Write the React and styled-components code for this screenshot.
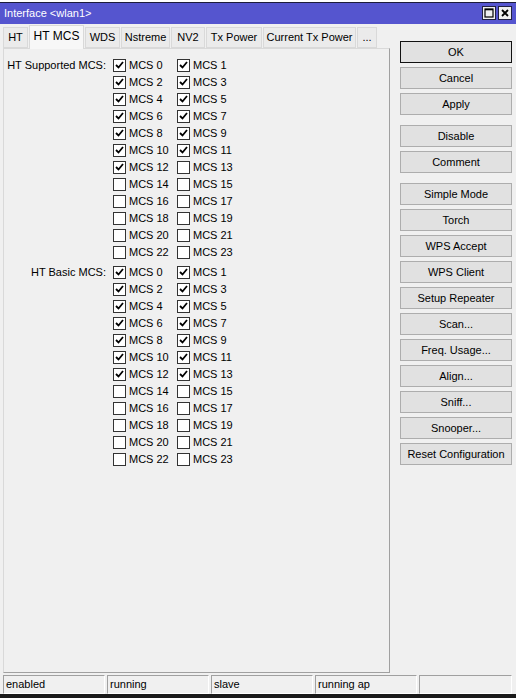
import React from 'react';
import styled, { createGlobalStyle } from 'styled-components';

const GlobalStyle = createGlobalStyle`
  html, body {
    margin: 0;
    padding: 0;
    background: #f0f0f0;
  }
  body {
    font-family: "Liberation Sans", Arial, sans-serif;
    font-size: 11px;
    color: #000;
  }
`;

const Screen = styled.div`
  width: 516px;
  height: 698px;
  display: flex;
  flex-direction: column;
  overflow: hidden;
  background: #f0f0f0;
`;

const TopStrip = styled.div`
  height: 2px;
  background: #fff;
  border-bottom: 1px solid #1c1c3a;
`;

const TitleBar = styled.div`
  height: 21px;
  background: #5555cf;
  display: flex;
  align-items: center;
  justify-content: space-between;
  padding: 0 4px;
`;

const Title = styled.span`
  color: #fff;
  font-size: 11px;
`;

const TitleButtons = styled.div`
  display: flex;
  gap: 2px;
`;

const TitleButton = styled.div`
  width: 14px;
  height: 14px;
  box-sizing: border-box;
  background: #f0f0f0;
  border: 1px solid #202040;
  display: flex;
  align-items: center;
  justify-content: center;
`;

const Body = styled.div`
  flex: 1;
  display: flex;
  gap: 10px;
  padding: 1px 4px 0 3px;
`;

const LeftPane = styled.div`
  width: 387px;
  display: flex;
  flex-direction: column;
`;

const TabRow = styled.div`
  display: flex;
  align-items: flex-end;
  height: 23px;
`;

const Tab = styled.div`
  width: ${p => p.$w}px;
  height: ${p => (p.$active ? '24px' : '21px')};
  box-sizing: border-box;
  display: flex;
  align-items: center;
  justify-content: center;
  white-space: nowrap;
  border: 1px solid #d9d9d9;
  border-bottom: ${p => (p.$active ? 'none' : '1px solid #d9d9d9')};
  background: ${p => (p.$active ? '#f7f7f7' : '#ebebeb')};
  margin-right: 1px;
  margin-bottom: ${p => (p.$active ? '-1px' : '0')};
  padding-bottom: ${p => (p.$active ? '3px' : '0')};
  font-size: ${p => (p.$active ? '12px' : '11px')};
  position: relative;
  z-index: ${p => (p.$active ? 1 : 0)};
`;

const Panel = styled.div`
  height: 625px;
  box-sizing: border-box;
  border: 1px solid #d9d9d9;
  border-right: 1px solid #a0a0a0;
  border-bottom: 1px solid #a0a0a0;
  background: #f0f0f0;
  padding-top: 8px;
`;

const Group = styled.div`
  display: grid;
  grid-template-columns: 109px 64px 64px;
  grid-auto-rows: 17px;
  margin-bottom: 3px;
`;

const GroupLabel = styled.div`
  grid-column: 1;
  text-align: right;
  align-self: center;
  white-space: nowrap;
  padding-right: 7px;
`;

const CheckItem = styled.label`
  display: flex;
  align-items: center;
  gap: 3px;
  grid-column: ${p => p.$col};
  white-space: nowrap;
`;

const Box = styled.span`
  width: 13px;
  height: 13px;
  box-sizing: border-box;
  border: 1px solid #333;
  background: #fff;
  display: inline-flex;
  align-items: center;
  justify-content: center;
`;

const Buttons = styled.div`
  width: 112px;
  display: flex;
  flex-direction: column;
  padding-top: 16px;
`;

const Button = styled.div`
  height: 22px;
  box-sizing: border-box;
  border: 1px solid ${p => (p.$default ? '#111' : '#adadad')};
  background: #e1e1e1;
  display: flex;
  align-items: center;
  justify-content: center;
  margin-bottom: ${p => (p.$gapAfter ? '10px' : '4px')};
  white-space: nowrap;
`;

const StatusBar = styled.div`
  display: flex;
  gap: 2px;
  padding: 2px 4px 0 3px;
  height: 20px;
`;

const StatusCell = styled.div`
  flex: ${p => (p.$w ? `0 0 ${p.$w}px` : '1')};
  box-sizing: border-box;
  border-top: 1px solid #a0a0a0;
  border-left: 1px solid #a0a0a0;
  border-right: 1px solid #fff;
  border-bottom: 1px solid #fff;
  padding-left: 2px;
  display: flex;
  align-items: center;
`;

const BottomStrip = styled.div`
  height: 4px;
  margin-top: auto;
  background: #1a1a1a;
`;

const Check = () => (
  <svg width="9" height="8" viewBox="0 0 9 8">
    <path d="M1 4 L3.5 6.5 L8 1" fill="none" stroke="#000" strokeWidth="1.8" />
  </svg>
);

const CheckBox = ({ checked, label, col }) => (
  <CheckItem $col={col}>
    <Box>{checked && <Check />}</Box>
    {label}
  </CheckItem>
);

const McsGroup = ({ label, checkedUpTo }) => {
  const rows = [];
  for (let i = 0; i < 12; i++) {
    const a = i * 2;
    const b = a + 1;
    rows.push(
      <React.Fragment key={i}>
        {i === 0 && <GroupLabel>{label}</GroupLabel>}
        <CheckBox col={2} checked={a <= checkedUpTo} label={`MCS ${a}`} />
        <CheckBox col={3} checked={b <= checkedUpTo} label={`MCS ${b}`} />
      </React.Fragment>
    );
  }
  return <Group>{rows}</Group>;
};

const tabs = [
  { name: 'HT', w: 25 },
  { name: 'HT MCS', w: 55, active: true },
  { name: 'WDS', w: 35 },
  { name: 'Nstreme', w: 49 },
  { name: 'NV2', w: 34 },
  { name: 'Tx Power', w: 56 },
  { name: 'Current Tx Power', w: 93 },
  { name: '...', w: 20 },
];

const buttons = [
  { name: 'OK', def: true },
  { name: 'Cancel' },
  { name: 'Apply', gap: true },
  { name: 'Disable' },
  { name: 'Comment', gap: true },
  { name: 'Simple Mode' },
  { name: 'Torch' },
  { name: 'WPS Accept' },
  { name: 'WPS Client' },
  { name: 'Setup Repeater' },
  { name: 'Scan...' },
  { name: 'Freq. Usage...' },
  { name: 'Align...' },
  { name: 'Sniff...' },
  { name: 'Snooper...' },
  { name: 'Reset Configuration' },
];

export default function App() {
  return (
    <Screen>
      <GlobalStyle />
      <TopStrip />
      <TitleBar>
        <Title>Interface &lt;wlan1&gt;</Title>
        <TitleButtons>
          <TitleButton>
            <svg width="10" height="10" viewBox="0 0 10 10">
              <rect x="1" y="1" width="8" height="8" fill="none" stroke="#000" strokeWidth="1.2" />
              <line x1="1" y1="1.6" x2="9" y2="1.6" stroke="#000" strokeWidth="1.4" />
            </svg>
          </TitleButton>
          <TitleButton>
            <svg width="10" height="10" viewBox="0 0 10 10">
              <path d="M2 2 L8 8 M8 2 L2 8" stroke="#000" strokeWidth="1.8" />
            </svg>
          </TitleButton>
        </TitleButtons>
      </TitleBar>
      <Body>
        <LeftPane>
          <TabRow>
            {tabs.map(t => (
              <Tab key={t.name} $active={t.active} $w={t.w}>{t.name}</Tab>
            ))}
          </TabRow>
          <Panel>
            <McsGroup label="HT Supported MCS:" checkedUpTo={12} />
            <McsGroup label="HT Basic MCS:" checkedUpTo={13} />
          </Panel>
        </LeftPane>
        <Buttons>
          {buttons.map(b => (
            <Button key={b.name} $default={b.def} $gapAfter={b.gap}>{b.name}</Button>
          ))}
        </Buttons>
      </Body>
      <StatusBar>
        <StatusCell $w={102}>enabled</StatusCell>
        <StatusCell $w={102}>running</StatusCell>
        <StatusCell $w={102}>slave</StatusCell>
        <StatusCell $w={102}>running ap</StatusCell>
        <StatusCell />
      </StatusBar>
      <BottomStrip />
    </Screen>
  );
}
